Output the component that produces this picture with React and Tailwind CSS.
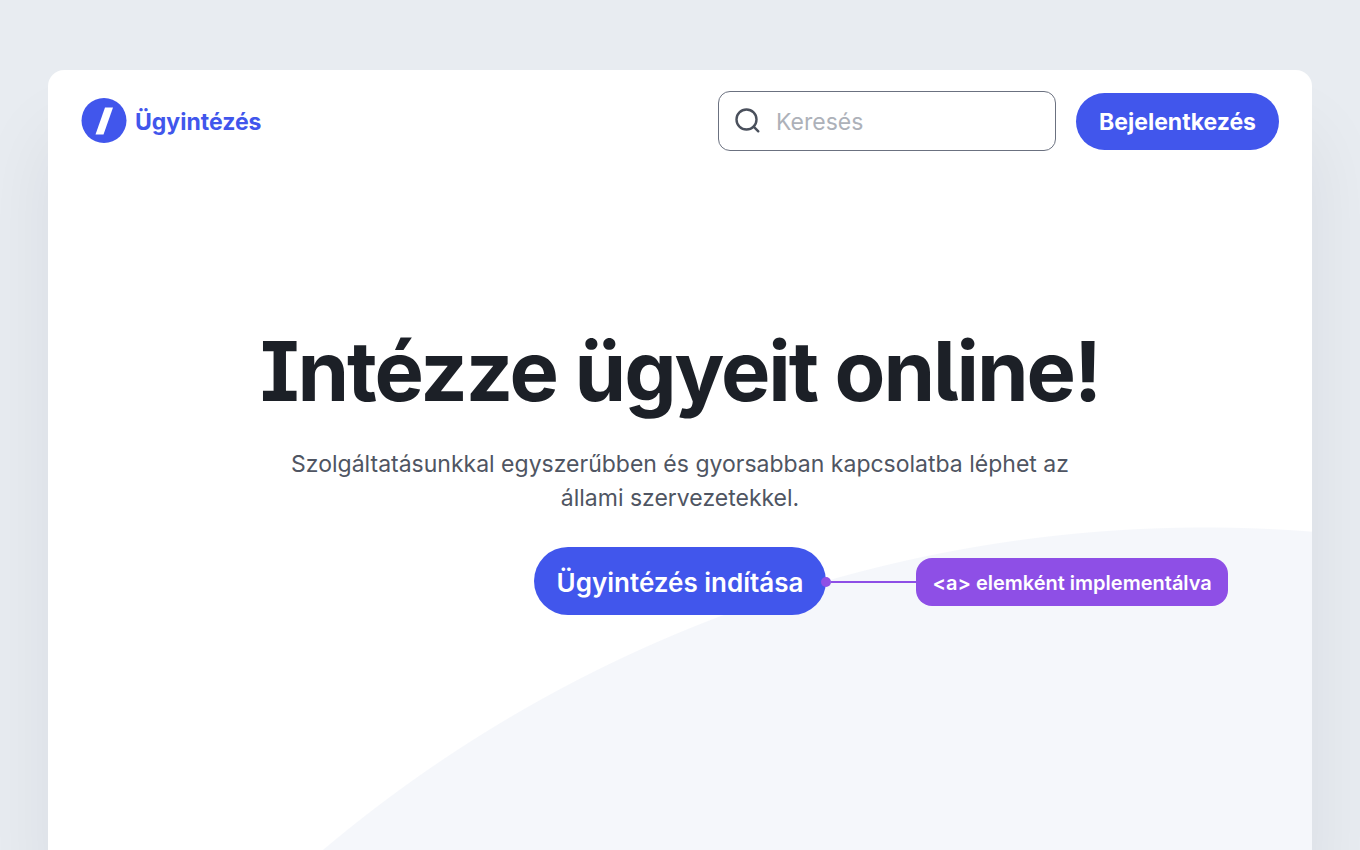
function Logo() {
  return (
    <a href="#" className="flex items-center gap-2 text-[#4156ec]">
      <svg className="size-[46px]" viewBox="0 0 46 46" aria-hidden="true">
        <circle cx="23" cy="22.5" r="22.5" fill="currentColor" />
        <path d="M24 9.500h8L22.500 36.500h-8z" fill="#fff" />
      </svg>
      <span className="pt-0.5 text-[23px] font-bold">Ügyintézés</span>
    </a>
  );
}

function SearchBox() {
  return (
    <label className="flex h-[60px] w-[338px] items-center gap-4 rounded-xl border border-[#6b7180] bg-white px-[15px]">
      <svg
        className="size-[26px] shrink-0 text-[#4a505c]"
        viewBox="0 0 26 26"
        fill="none"
        stroke="currentColor"
        strokeWidth="2.4"
        strokeLinecap="round"
        aria-hidden="true"
      >
        <circle cx="12.500" cy="11.500" r="10" />
        <path d="M19.600 18.600 24.300 23.300" />
      </svg>
      <input
        type="search"
        aria-label="Keresés"
        placeholder="Keresés"
        className="w-full min-w-0 bg-transparent pt-0.5 text-[23px] outline-none placeholder:text-[#adb1b9]"
      />
    </label>
  );
}

function Header() {
  return (
    <header className="flex items-center justify-between px-[33px] pt-[21px]">
      <Logo />
      <div className="flex items-center gap-5">
        <SearchBox />
        <button
          type="button"
          className="h-[57px] rounded-full bg-[#4156ec] px-[23px] pt-0.5 text-[23px] font-bold text-white"
        >
          Bejelentkezés
        </button>
      </div>
    </header>
  );
}

// Label with a connector line, pinned to the right side of its parent
function Callout({ children }) {
  return (
    <div className="absolute top-1/2 left-full -ml-[5px] flex h-[50px] -translate-y-6 items-center">
      <span className="size-[10px] rounded-full bg-[#8e4fe6]" />
      <span className="h-0.5 w-[85px] bg-[#8e4fe6]" />
      <span className="rounded-2xl bg-[#8e4fe6] px-4 pt-[11px] pb-[9px] text-xl leading-7 font-semibold whitespace-nowrap text-white">
        {children}
      </span>
    </div>
  );
}

function Hero() {
  return (
    <main className="flex flex-col items-center px-8 pt-[168px] text-center">
      <h1 className="text-[83px] leading-[104px] font-bold tracking-tight text-[#1c2027] [font-feature-settings:'cv05','cv08']">
        Intézze ügyeit online!
      </h1>
      <p className="mt-6 max-w-[800px] text-[23px] leading-[34px] text-[#4f5562]">
        Szolgáltatásunkkal egyszerűbben és gyorsabban kapcsolatba léphet az
        állami szervezetekkel.
      </p>
      <div className="relative mt-8">
        <a
          href="#"
          className="flex h-[68px] items-center rounded-full bg-[#4156ec] px-[23px] pt-0.5 text-[26px] font-semibold text-white"
        >
          Ügyintézés indítása
        </a>
        <Callout>&lt;a&gt; elemként implementálva</Callout>
      </div>
    </main>
  );
}

export default function App() {
  return (
    <div className="flex min-h-screen flex-col overflow-hidden bg-[#e8ecf1] px-12 pt-[70px] font-['Inter','Liberation_Sans',sans-serif]">
      <div className="flex-1 rounded-t-2xl bg-white bg-[radial-gradient(circle_at_calc(100%-107px)_1825px,#f5f7fb_1367px,transparent_1368px)] shadow-[0_64px_80px_rgba(28,32,39,0.07)]">
        <Header />
        <Hero />
      </div>
    </div>
  );
}
